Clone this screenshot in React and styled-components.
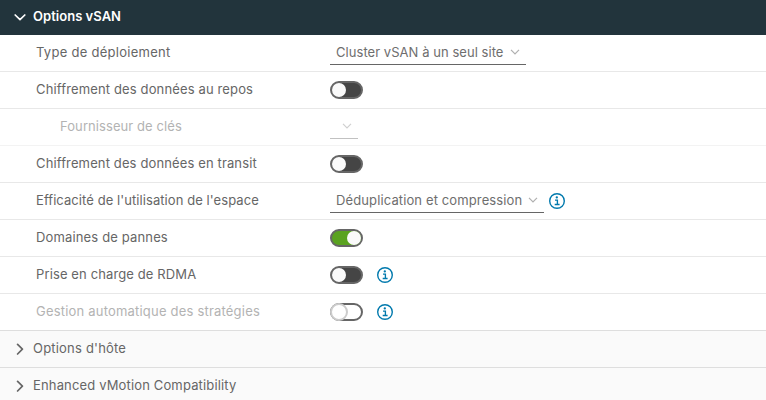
import React from "react";
import styled, { createGlobalStyle } from "styled-components";

const GlobalStyle = createGlobalStyle`
  * { box-sizing: border-box; }
  body {
    margin: 0;
    background: #fff;
    color: #666;
    font: 400 13px/20px Inter, "Open Sans", sans-serif;
    overflow: hidden;
  }
`;

const Panel = styled.main`
  display: flex;
  flex-direction: column;
  height: 400px;
  overflow: hidden;
`;

const SectionHeader = styled.header`
  display: flex;
  flex: none;
  align-items: center;
  gap: 7px;
  height: ${(p) => (p.$open ? 35 : 37)}px;
  padding: 0 0 ${(p) => (p.$open ? 2 : 1)}px 14px;
  background: ${(p) => (p.$open ? "#22343c" : "#fafafa")};
  color: ${(p) => (p.$open ? "#fff" : "#666")};
  font-weight: ${(p) => (p.$open ? 600 : 400)};
  border-bottom: ${(p) => (p.$open ? "none" : "1px solid #dedede")};
`;

const Row = styled.div`
  display: grid;
  flex: none;
  grid-template-columns: 294px 1fr;
  align-items: center;
  height: 37px;
  padding-left: 36px;
  border-bottom: 1px solid ${(p) => p.$line || "#e8e8e8"};
`;

const Text = styled.span`
  white-space: nowrap;
  letter-spacing: ${(p) => p.$track || 0}px;
`;

const Title = styled(Text)`
  padding-bottom: 1px;
`;

const Label = styled(Text)`
  padding-left: ${(p) => (p.$nested ? 24 : 0)}px;
  padding-bottom: 2px;
  color: ${(p) => (p.$disabled ? "#b3b3b3" : "inherit")};
`;

const Control = styled.div`
  display: flex;
  align-items: center;
`;

const Select = styled.div`
  display: flex;
  align-items: center;
  justify-content: space-between;
  width: ${(p) => p.$width}px;
  height: 24px;
  padding: 0 6px 1px;
  color: #6e6e6e;
  border-bottom: 1px solid ${(p) => (p.$disabled ? "#c1c1c1" : "#666")};
`;

const Switch = styled.div`
  display: flex;
  justify-content: ${(p) => (p.$on ? "flex-end" : "flex-start")};
  align-items: center;
  width: 33px;
  height: 18px;
  border: 2px solid #666;
  border-radius: 9px;
  background: ${(p) => (p.$disabled ? "#fff" : p.$on ? "#5aa220" : "#454545")};
`;

const Knob = styled.div`
  flex: none;
  width: ${(p) => (p.$disabled ? 18 : 14)}px;
  height: ${(p) => (p.$disabled ? 18 : 14)}px;
  margin-left: ${(p) => (p.$disabled ? -2 : 0)}px;
  border-radius: 50%;
  background: ${(p) => (p.$disabled ? "#fff" : "#fafafa")};
  border: ${(p) => (p.$disabled ? "2px solid #ccc" : "none")};
`;

const InfoSvg = styled.svg`
  flex: none;
  margin-left: ${(p) => p.$gap}px;
`;

const Chevron = styled.svg`
  flex: none;
  display: block;
`;

const SelectCaret = ({ disabled }) => (
  <Chevron width="10" height="6" viewBox="0 0 10 6" fill="none" stroke={disabled ? "#d0d0d0" : "#b0b0b0"} strokeWidth="1.2">
    <path d="M1 0.8 5 4.8 9 0.8" />
  </Chevron>
);

const SectionCaret = ({ open }) => (
  <Chevron width="12" height="12" viewBox="0 0 12 12" fill="none" stroke="currentColor" strokeWidth="1.7" strokeLinecap="round" strokeLinejoin="round">
    <path d={open ? "M1.2 4 6 8.6 10.8 4" : "M3.6 1.4 8.4 6.2 3.6 11"} />
  </Chevron>
);

const Info = ({ gap }) => (
  <InfoSvg $gap={gap} width="16" height="16" viewBox="0 0 16 16" fill="none" stroke="#0079ad">
    <circle cx="8" cy="8" r="7.3" strokeWidth="1.4" />
    <circle cx="7.8" cy="4.4" r="1.15" fill="#0079ad" stroke="none" />
    <path d="M6 7.1H8.4V11.5M5.7 11.5H10.6" strokeWidth="1.35" />
  </InfoSvg>
);

const Toggle = ({ on, disabled }) => (
  <Switch $on={on} $disabled={disabled} role="switch" aria-checked={!!on}>
    <Knob $disabled={disabled} />
  </Switch>
);

const Dropdown = ({ width, text, track, disabled }) => (
  <Select $width={width} $disabled={disabled}>
    <Text $track={track}>{text}</Text>
    <SelectCaret disabled={disabled} />
  </Select>
);

const rows = [
  { label: "Type de déploiement", track: 0.27, control: <Dropdown width={196} text="Cluster vSAN à un seul site" track={0.05} /> },
  { label: "Chiffrement des données au repos", track: 0.14, control: <Toggle /> },
  { label: "Fournisseur de clés", track: 0.08, nested: true, disabled: true, line: "#f3f3f3", control: <Dropdown width={28} disabled /> },
  { label: "Chiffrement des données en transit", track: 0.13, control: <Toggle /> },
  { label: "Efficacité de l'utilisation de l'espace", track: 0.07, control: <><Dropdown width={214} text="Déduplication et compression" track={0.12} /><Info gap={5} /></> },
  { label: "Domaines de pannes", track: 0.15, control: <Toggle on /> },
  { label: "Prise en charge de RDMA", track: 0.12, control: <><Toggle /><Info gap={14} /></> },
  { label: "Gestion automatique des stratégies", track: 0.2, disabled: true, line: "#dedede", control: <><Toggle disabled /><Info gap={14} /></> },
];

export default function App() {
  return (
    <>
      <GlobalStyle />
      <Panel>
        <SectionHeader $open>
          <SectionCaret open />
          <Title $track={0.03}>Options vSAN</Title>
        </SectionHeader>
        {rows.map((r) => (
          <Row key={r.label} $line={r.line}>
            <Label $track={r.track} $nested={r.nested} $disabled={r.disabled}>{r.label}</Label>
            <Control>{r.control}</Control>
          </Row>
        ))}
        <SectionHeader>
          <SectionCaret />
          <Title $track={0.2}>Options d'hôte</Title>
        </SectionHeader>
        <SectionHeader>
          <SectionCaret />
          <Title $track={0.15}>Enhanced vMotion Compatibility</Title>
        </SectionHeader>
      </Panel>
    </>
  );
}
